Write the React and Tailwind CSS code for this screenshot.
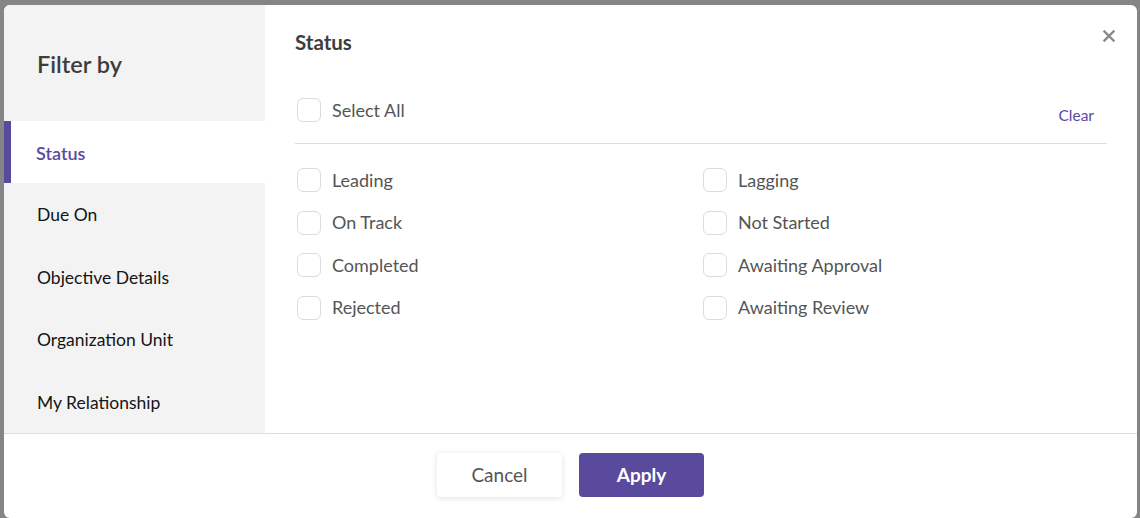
import { useState } from "react";

const MENU = ["Status", "Due On", "Objective Details", "Organization Unit", "My Relationship"];

const OPTIONS = [
  "Leading",
  "Lagging",
  "On Track",
  "Not Started",
  "Completed",
  "Awaiting Approval",
  "Rejected",
  "Awaiting Review",
];

function Checkbox({ label, checked, onToggle }) {
  return (
    <label className="flex items-center cursor-pointer h-[42.5px]">
      <span
        onClick={onToggle}
        className={`w-[24px] h-[24px] rounded-[6px] border ${
          checked ? "bg-[#5a4a9e] border-[#5a4a9e]" : "bg-white border-[#dcdcdc]"
        }`}
      />
      <span className="ml-[11px] text-[18px] text-[#555555]">{label}</span>
    </label>
  );
}

export default function App() {
  const [active, setActive] = useState("Status");
  const [selected, setSelected] = useState([]);

  const toggle = (opt) =>
    setSelected((s) => (s.includes(opt) ? s.filter((o) => o !== opt) : [...s, opt]));

  return (
    <div
      className="w-[1140px] h-[518px] bg-[#858585] pt-[5px] pl-[4px] overflow-hidden"
      style={{ fontFamily: "Lato, 'Open Sans', sans-serif" }}
    >
      <div className="w-[1133px] h-[513px] bg-white rounded-[6px] overflow-hidden flex flex-col">
        {/* Body */}
        <div className="flex h-[428px]">
          {/* Sidebar */}
          <div className="w-[261px] bg-[#f3f3f3] flex flex-col">
            <div className="h-[116px] flex items-center pl-[33px]">
              <h2 className="text-[23.5px] font-semibold text-[#3d3d3d] mt-[3px]">Filter by</h2>
            </div>
            {MENU.map((item) => (
              <button
                key={item}
                onClick={() => setActive(item)}
                className={`flex-1 flex items-center text-left text-[17.5px] pt-[2px] ${
                  active === item
                    ? "bg-white border-l-[7px] border-[#5a4a9e] pl-[25px] text-[#5a4a9e] font-semibold text-[18px]"
                    : "pl-[33px] text-[#151515]"
                }`}
              >
                {item}
              </button>
            ))}
          </div>

          {/* Content */}
          <div className="flex-1 relative pl-[30px] pr-[30px]">
            <button className="absolute right-[22px] top-[25px] text-[#8a8a8a]">
              <svg width="12" height="12" viewBox="0 0 12 12" fill="none" stroke="currentColor" strokeWidth="2.4" strokeLinecap="square">
                <path d="M1.5 1.5l9 9M10.5 1.5l-9 9" />
              </svg>
            </button>
            <h3 className="mt-[25px] text-[20.5px] font-bold text-[#3d3d3d] leading-[24px]">Status</h3>
            <div className="mt-[35px] flex items-center justify-between pl-[2px] pb-[11.5px] border-b border-[#dedede]">
              <Checkbox
                label="Select All"
                checked={selected.length === OPTIONS.length}
                onToggle={() => setSelected(selected.length === OPTIONS.length ? [] : OPTIONS)}
              />
              <button onClick={() => setSelected([])} className="text-[15.5px] text-[#5a4a9e] mt-[11px] mr-[13px]">
                Clear
              </button>
            </div>
            <div className="mt-[15px] grid grid-cols-[406px_1fr] pl-[2px]">
              {OPTIONS.map((opt) => (
                <Checkbox key={opt} label={opt} checked={selected.includes(opt)} onToggle={() => toggle(opt)} />
              ))}
            </div>
          </div>
        </div>

        {/* Footer */}
        <div className="flex-1 border-t border-[#dedede] flex items-center justify-center gap-[17px] pb-[2px]">
          <button className="w-[125px] h-[44px] rounded-[4px] bg-white shadow-[0_1px_6px_rgba(0,0,0,0.12)] text-[19px] text-[#555555]">
            Cancel
          </button>
          <button className="w-[125px] h-[44px] rounded-[4px] bg-[#5a4a9e] text-[19px] font-bold text-white">
            Apply
          </button>
        </div>
      </div>
    </div>
  );
}
